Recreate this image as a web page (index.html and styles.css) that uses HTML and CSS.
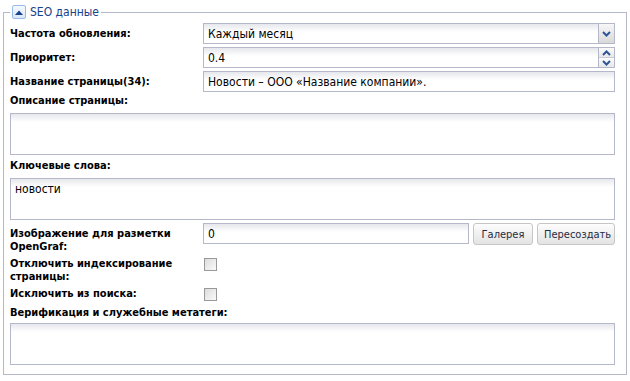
FILE: index.html
```html
<!DOCTYPE html>
<html lang="ru">
<head>
    <meta charset="UTF-8">
    <title>SEO данные</title>
    <link rel="stylesheet" href="styles.css">
</head>
<body>
    <fieldset class="seo">
        <legend>
            <span class="toggle">
                <svg width="8" height="5" viewBox="0 0 8 5"><path d="M0 5 L4 0.5 L8 5 Z" fill="#15428b"/></svg>
            </span>
            <span class="legend-text">SEO данные</span>
        </legend>

        <div class="row first">
            <label class="lbl">Частота обновления:</label>
            <div class="field combo">
                <input type="text" value="Каждый месяц" readonly>
                <span class="trigger">
                    <svg width="9" height="6" viewBox="0 0 9 6"><path d="M1 1 L4.5 4.5 L8 1" fill="none" stroke="#2f5597" stroke-width="2"/></svg>
                </span>
            </div>
        </div>

        <div class="row">
            <label class="lbl">Приоритет:</label>
            <div class="field spinner">
                <input type="text" value="0.4">
                <span class="spin">
                    <span class="spin-up"><svg width="9" height="6" viewBox="0 0 9 6"><path d="M1 5 L4.5 1.5 L8 5" fill="none" stroke="#2f5597" stroke-width="2"/></svg></span>
                    <span class="spin-down"><svg width="9" height="6" viewBox="0 0 9 6"><path d="M1 1 L4.5 4.5 L8 1" fill="none" stroke="#2f5597" stroke-width="2"/></svg></span>
                </span>
            </div>
        </div>

        <div class="row">
            <label class="lbl">Название страницы(34):</label>
            <div class="field">
                <input type="text" value="Новости – ООО «Название компании».">
            </div>
        </div>

        <div class="block first-block">
            <label class="lbl">Описание страницы:</label>
            <textarea></textarea>
        </div>

        <div class="block">
            <label class="lbl">Ключевые слова:</label>
            <textarea>новости</textarea>
        </div>

        <div class="row og">
            <label class="lbl">Изображение для разметки OpenGraf:</label>
            <div class="field with-buttons">
                <input type="text" value="0">
                <button class="btn">Галерея</button>
                <button class="btn">Пересоздать</button>
            </div>
        </div>

        <div class="row check">
            <label class="lbl">Отключить индексирование страницы:</label>
            <div class="field"><span class="checkbox"></span></div>
        </div>

        <div class="row check">
            <label class="lbl">Исключить из поиска:</label>
            <div class="field"><span class="checkbox"></span></div>
        </div>

        <div class="block last-block">
            <label class="lbl">Верификация и служебные метатеги:</label>
            <textarea></textarea>
        </div>
    </fieldset>
</body>
</html>
```

FILE: styles.css
```css
body {
    margin: 0;
    background: #fff;
    font-family: "DejaVu Sans", Tahoma, sans-serif;
    font-stretch: condensed;
    font-size: 11px;
    color: #000;
}
.seo {
    margin: 5px 3px 0;
    padding: 4px 11px 9px 6px;
    border: 1px solid #b5b8c8;
    min-width: 0;
}
.seo legend {
    padding: 0 2px;
    display: flex;
    align-items: center;
    gap: 4px;
    height: 14px;
}
.toggle {
    width: 14px;
    height: 14px;
    box-sizing: border-box;
    border: 1px solid #99bbe8;
    border-radius: 2px;
    background: linear-gradient(#f5f9fe, #d9e6f6);
    display: flex;
    align-items: center;
    justify-content: center;
}
.legend-text {
    font-size: 12px;
    color: #15428b;
    line-height: 14px;
}
.row {
    display: grid;
    grid-template-columns: 193px 1fr;
    margin-top: 3px;
}
.row.first { margin-top: 0; }
.lbl {
    font-weight: bold;
    line-height: 13px;
    padding-top: 4px;
}
.field {
    display: flex;
    align-items: center;
}
.field input {
    flex: 1;
    min-width: 0;
    height: 21px;
    box-sizing: border-box;
    border: 1px solid #b5b8c8;
    background: linear-gradient(#e6e7ec 0, #fff 8px);
    padding: 0 4px;
    font-family: inherit;
    font-stretch: condensed;
    font-size: 12px;
    color: #000;
    outline: none;
}
.combo input, .spinner input { border-right: 0; }
.trigger {
    width: 17px;
    height: 21px;
    box-sizing: border-box;
    border: 1px solid #b5b8c8;
    background: linear-gradient(#f7f7f7, #d9d9d9);
    display: flex;
    align-items: center;
    justify-content: center;
}
.spin {
    width: 17px;
    height: 21px;
    box-sizing: border-box;
    border: 1px solid #b5b8c8;
    display: flex;
    flex-direction: column;
}
.spin-up, .spin-down {
    flex: 1;
    display: flex;
    align-items: center;
    justify-content: center;
    background: linear-gradient(#fbfbfb, #e8e8e8);
}
.spin-up { border-bottom: 1px solid #c9ccd8; }
.block { margin-top: 4px; }
.block.first-block { margin-top: 2px; }
.block .lbl {
    display: block;
    padding-top: 0;
    margin-bottom: 5px;
    line-height: 14px;
}
.block textarea {
    display: block;
    width: 100%;
    height: 42px;
    box-sizing: border-box;
    border: 1px solid #b5b8c8;
    background: linear-gradient(#e6e7ec 0, #fff 8px);
    padding: 3px 4px;
    font-family: inherit;
    font-stretch: condensed;
    font-size: 12px;
    color: #000;
    resize: none;
    outline: none;
}
.row.og { margin-top: 3px; align-items: start; }
.with-buttons { gap: 4px; align-items: flex-start; }
.btn {
    height: 22px;
    box-sizing: border-box;
    border: 1px solid #c6c6c6;
    border-radius: 3px;
    background: linear-gradient(#fdfdfd, #e3e3e3);
    padding: 0 6px;
    font-family: inherit;
    font-stretch: condensed;
    font-size: 11px;
    color: #1e2c44;
}
.btn:first-of-type { width: 60px; }
.btn:last-of-type { width: 78px; }
.row.check { margin-top: 4px; }
.row.check .lbl { padding-top: 0; }
.row.check .field { align-items: flex-start; padding-top: 1px; }
.checkbox {
    width: 13px;
    height: 13px;
    box-sizing: border-box;
    margin-left: 1px;
    border: 1px solid #999;
    background: linear-gradient(135deg, #dcdcdc, #fafafa);
}
.block.last-block { margin-top: 5px; }
.block.last-block .lbl { margin-bottom: 3px; }
```
